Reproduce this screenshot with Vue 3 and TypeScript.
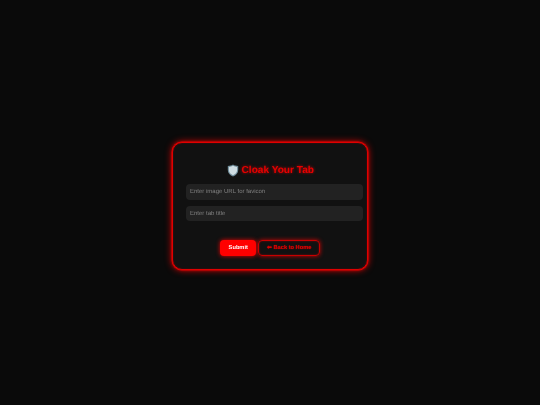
<script setup lang="ts">
const title = 'Cloak Your Tab'
</script>

<template>
  <main class="page">
    <section class="card">
      <h1 class="heading">
        <svg class="shield" viewBox="0 0 12 13" aria-hidden="true">
          <path d="M6 .6 C4.4 1.6 2.6 2 .8 2.1 V6 C.8 9 3 11.4 6 12.5 C9 11.4 11.2 9 11.2 6 V2.1 C9.4 2 7.6 1.6 6 .6Z" fill="#6f8c99" />
          <path d="M6 1.7 C4.7 2.4 3.3 2.8 1.9 2.9 V6 C1.9 8.3 3.6 10.3 6 11.3 C8.4 10.3 10.1 8.3 10.1 6 V2.9 C8.7 2.8 7.3 2.4 6 1.7Z" fill="#cfdde3" />
        </svg>
        <span>{{ title }}</span>
      </h1>
      <input class="field" type="text" placeholder="Enter image URL for favicon" />
      <input class="field" type="text" placeholder="Enter tab title" />
      <div class="actions">
        <button class="btn primary" type="button">Submit</button>
        <button class="btn outline" type="button">⬅ Back to Home</button>
      </div>
    </section>
  </main>
</template>

<style>
html, body { margin: 0; background: #0a0a0a; }
</style>

<style scoped>
.page {
  box-sizing: border-box;
  width: 540px;
  height: 405px;
  padding-top: 7px;
  display: flex;
  align-items: center;
  justify-content: center;
  background-color: #0a0a0a;
  font-family: "Liberation Sans", Arial, sans-serif;
  text-rendering: geometricPrecision;
}
.card {
  box-sizing: border-box;
  width: 196px;
  height: 128px;
  padding: 19px 4.5px 0 13px;
  background: #111;
  border: 1px solid #e00000;
  border-radius: 10px;
  box-shadow: 0 0 0 0.5px #d80000, 0 0 7px rgba(255, 0, 0, 0.9), 0 0 3px rgba(255, 0, 0, 0.5), inset 0 0 2px rgba(255, 0, 0, 0.3);
  display: flex;
  flex-direction: column;
  align-items: stretch;
  filter: blur(0.3px);
}
.heading {
  margin: 0 0 6px;
  height: 16px;
  display: flex;
  align-items: center;
  justify-content: center;
  gap: 3px;
  padding-right: 8px;
  font-size: 10.1px;
  font-weight: 700;
  color: #e60000;
  text-shadow: 0 0 3px rgba(255, 0, 0, 0.7);
}
.shield {
  width: 12px;
  height: 13px;
  flex: none;
}
.field {
  box-sizing: border-box;
  height: 15.5px;
  width: 100%;
  margin-bottom: 6px;
  padding: 1px 4px 0;
  border: 0;
  border-radius: 4px;
  background: #222;
  color: #ddd;
  font-family: inherit;
  font-size: 6px;
  text-rendering: geometricPrecision;
  outline: none;
}
.field::placeholder {
  color: #808080;
  opacity: 1;
}
.actions {
  display: flex;
  justify-content: center;
  align-items: center;
  gap: 2px;
  margin-top: 13px;
  padding-right: 8px;
}
.btn {
  box-sizing: border-box;
  height: 15.5px;
  border-radius: 4px;
  font-family: inherit;
  font-size: 5.7px;
  font-weight: 700;
  text-rendering: geometricPrecision;
  padding: 1px 0 0;
}
.primary {
  width: 36px;
  background: #f00;
  border: 0;
  color: #fff;
  box-shadow: 0 0 4px rgba(255, 0, 0, 0.9);
}
.outline {
  width: 62px;
  background: transparent;
  border: 1px solid #c80000;
  color: #d80000;
  box-shadow: 0 0 4px rgba(255, 0, 0, 0.8), inset 0 0 2px rgba(255, 0, 0, 0.5);
  text-shadow: 0 0 1px rgba(255, 0, 0, 0.7);
}
</style>
